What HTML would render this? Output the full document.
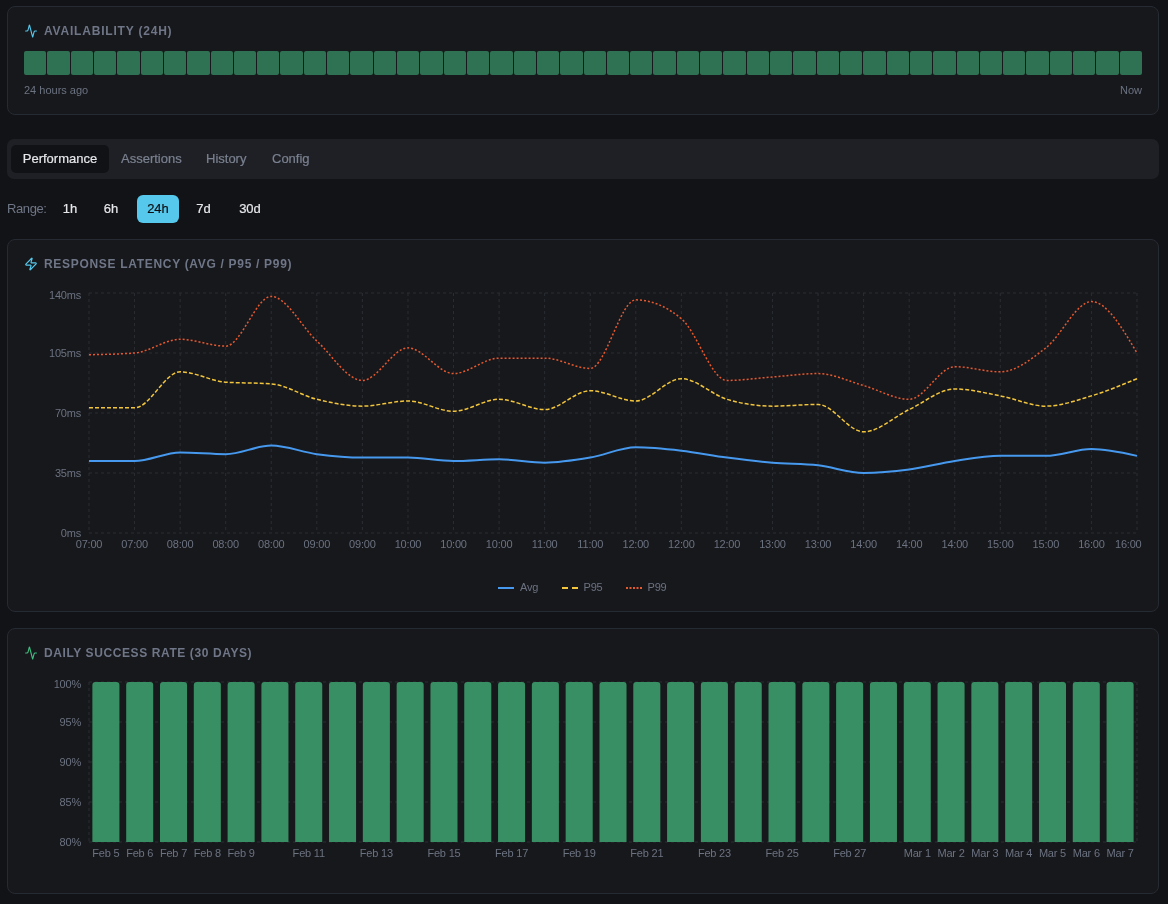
<!DOCTYPE html>
<html><head><meta charset="utf-8">
<style>
*{margin:0;padding:0;box-sizing:border-box}
html,body{width:1168px;height:904px;overflow:hidden;background:#121317;font-family:"Liberation Sans", sans-serif}
.card{position:absolute;left:7px;width:1152px;background:#17181c;border:1px solid #262a33;border-radius:8px}
.title{position:absolute;left:44px;font-size:12px;font-weight:bold;color:#6f7687;letter-spacing:0.6px;white-space:nowrap;line-height:1}
.abw{position:absolute;left:24px;top:51px;width:1118px;height:24px;display:flex;gap:1px}
.ab{flex:1;height:24px;background:#2f7153;border-radius:2px}
.small{position:absolute;font-size:11px;color:#6b7280;line-height:1;white-space:nowrap}
.tabs{position:absolute;left:7px;top:139px;width:1152px;height:40px;background:#1f2025;border-radius:7px}
.tab{position:absolute;top:145px;height:28px;font-size:13px;line-height:28px;color:#7a8190;white-space:nowrap;-webkit-text-stroke:0.2px}
.tab.act{background:#111215;color:#e6e7ea;border-radius:5px;text-align:center}
.rng{position:absolute;top:195px;height:28px;line-height:28px;font-size:13px;color:#e6e7ea;text-align:center;border-radius:6px;-webkit-text-stroke:0.2px}
.rng.act{background:#56c8ec;color:#0d0e10}
svg text.ax{font-family:"Liberation Sans", sans-serif;font-size:11px;fill:#6b7280;letter-spacing:-0.2px}
svg text.lg{font-family:"Liberation Sans", sans-serif;font-size:11px;fill:#6b7280;letter-spacing:-0.2px}
</style></head><body>
<div id="root" style="position:absolute;left:0;top:0;width:1168px;height:904px;background:#121317;will-change:transform">
<div class="card" style="top:6px;height:109px"></div>
<svg style="position:absolute;left:24px;top:24px" width="13" height="14" viewBox="-1 0 24 24" preserveAspectRatio="none" fill="none" stroke="#56c8ec" stroke-width="2" stroke-linecap="round" stroke-linejoin="round"><path d="M22 12h-2.48a2 2 0 0 0-1.93 1.46l-2.35 8.36a.25.25 0 0 1-.48 0L9.24 2.18a.25.25 0 0 0-.48 0l-2.35 8.36A2 2 0 0 1 4.49 12H2"/></svg>
<div class="title" style="top:25px;letter-spacing:0.8px">AVAILABILITY (24H)</div>
<div class="abw"><div class="ab"></div><div class="ab"></div><div class="ab"></div><div class="ab"></div><div class="ab"></div><div class="ab"></div><div class="ab"></div><div class="ab"></div><div class="ab"></div><div class="ab"></div><div class="ab"></div><div class="ab"></div><div class="ab"></div><div class="ab"></div><div class="ab"></div><div class="ab"></div><div class="ab"></div><div class="ab"></div><div class="ab"></div><div class="ab"></div><div class="ab"></div><div class="ab"></div><div class="ab"></div><div class="ab"></div><div class="ab"></div><div class="ab"></div><div class="ab"></div><div class="ab"></div><div class="ab"></div><div class="ab"></div><div class="ab"></div><div class="ab"></div><div class="ab"></div><div class="ab"></div><div class="ab"></div><div class="ab"></div><div class="ab"></div><div class="ab"></div><div class="ab"></div><div class="ab"></div><div class="ab"></div><div class="ab"></div><div class="ab"></div><div class="ab"></div><div class="ab"></div><div class="ab"></div><div class="ab"></div><div class="ab"></div></div>
<div class="small" style="left:24px;top:85px">24 hours ago</div>
<div class="small" style="left:1120px;top:85px">Now</div>

<div class="tabs"></div>
<div class="tab act" style="left:11px;width:98px">Performance</div>
<div class="tab" style="left:121px">Assertions</div>
<div class="tab" style="left:206px">History</div>
<div class="tab" style="left:272px">Config</div>

<div class="rng" style="left:7px;color:#6f7686;text-align:left;letter-spacing:-0.4px;-webkit-text-stroke:0">Range:</div>
<div class="rng" style="left:54px;width:32px">1h</div>
<div class="rng" style="left:94px;width:34px">6h</div>
<div class="rng act" style="left:137px;width:42px">24h</div>
<div class="rng" style="left:187px;width:33px">7d</div>
<div class="rng" style="left:229px;width:42px">30d</div>

<div class="card" style="top:239px;height:373px"></div>
<svg style="position:absolute;left:24px;top:257px" width="14" height="14" viewBox="0 0 24 24" fill="none" stroke="#56c8ec" stroke-width="2" stroke-linecap="round" stroke-linejoin="round"><path d="M4 14a1 1 0 0 1-.78-1.63l9.9-10.2a.5.5 0 0 1 .86.46l-1.92 6.02A1 1 0 0 0 13 10h7a1 1 0 0 1 .78 1.63l-9.9 10.2a.5.5 0 0 1-.86-.46l1.92-6.02A1 1 0 0 0 11 14z"/></svg>
<div class="title" style="top:258px;letter-spacing:0.69px">RESPONSE LATENCY (AVG / P95 / P99)</div>

<div class="card" style="top:628px;height:266px"></div>
<svg style="position:absolute;left:24px;top:646px" width="13" height="14" viewBox="-1 0 24 24" preserveAspectRatio="none" fill="none" stroke="#3fbf7f" stroke-width="2" stroke-linecap="round" stroke-linejoin="round"><path d="M22 12h-2.48a2 2 0 0 0-1.93 1.46l-2.35 8.36a.25.25 0 0 1-.48 0L9.24 2.18a.25.25 0 0 0-.48 0l-2.35 8.36A2 2 0 0 1 4.49 12H2"/></svg>
<div class="title" style="top:647px">DAILY SUCCESS RATE (30 DAYS)</div>

<svg style="position:absolute;left:0;top:0" width="1168" height="904">
<line x1="89.0" y1="293.0" x2="1137.0" y2="293.0" stroke="#2b2d34" stroke-dasharray="3 3"/>
<line x1="89.0" y1="353.0" x2="1137.0" y2="353.0" stroke="#2b2d34" stroke-dasharray="3 3"/>
<line x1="89.0" y1="413.0" x2="1137.0" y2="413.0" stroke="#2b2d34" stroke-dasharray="3 3"/>
<line x1="89.0" y1="473.0" x2="1137.0" y2="473.0" stroke="#2b2d34" stroke-dasharray="3 3"/>
<line x1="89.0" y1="533.0" x2="1137.0" y2="533.0" stroke="#2b2d34" stroke-dasharray="3 3"/>
<line x1="89.00" y1="293.0" x2="89.00" y2="533.0" stroke="#2b2d34" stroke-dasharray="3 3"/>
<line x1="134.57" y1="293.0" x2="134.57" y2="533.0" stroke="#2b2d34" stroke-dasharray="3 3"/>
<line x1="180.13" y1="293.0" x2="180.13" y2="533.0" stroke="#2b2d34" stroke-dasharray="3 3"/>
<line x1="225.70" y1="293.0" x2="225.70" y2="533.0" stroke="#2b2d34" stroke-dasharray="3 3"/>
<line x1="271.26" y1="293.0" x2="271.26" y2="533.0" stroke="#2b2d34" stroke-dasharray="3 3"/>
<line x1="316.83" y1="293.0" x2="316.83" y2="533.0" stroke="#2b2d34" stroke-dasharray="3 3"/>
<line x1="362.39" y1="293.0" x2="362.39" y2="533.0" stroke="#2b2d34" stroke-dasharray="3 3"/>
<line x1="407.96" y1="293.0" x2="407.96" y2="533.0" stroke="#2b2d34" stroke-dasharray="3 3"/>
<line x1="453.52" y1="293.0" x2="453.52" y2="533.0" stroke="#2b2d34" stroke-dasharray="3 3"/>
<line x1="499.09" y1="293.0" x2="499.09" y2="533.0" stroke="#2b2d34" stroke-dasharray="3 3"/>
<line x1="544.65" y1="293.0" x2="544.65" y2="533.0" stroke="#2b2d34" stroke-dasharray="3 3"/>
<line x1="590.22" y1="293.0" x2="590.22" y2="533.0" stroke="#2b2d34" stroke-dasharray="3 3"/>
<line x1="635.78" y1="293.0" x2="635.78" y2="533.0" stroke="#2b2d34" stroke-dasharray="3 3"/>
<line x1="681.35" y1="293.0" x2="681.35" y2="533.0" stroke="#2b2d34" stroke-dasharray="3 3"/>
<line x1="726.91" y1="293.0" x2="726.91" y2="533.0" stroke="#2b2d34" stroke-dasharray="3 3"/>
<line x1="772.48" y1="293.0" x2="772.48" y2="533.0" stroke="#2b2d34" stroke-dasharray="3 3"/>
<line x1="818.04" y1="293.0" x2="818.04" y2="533.0" stroke="#2b2d34" stroke-dasharray="3 3"/>
<line x1="863.61" y1="293.0" x2="863.61" y2="533.0" stroke="#2b2d34" stroke-dasharray="3 3"/>
<line x1="909.17" y1="293.0" x2="909.17" y2="533.0" stroke="#2b2d34" stroke-dasharray="3 3"/>
<line x1="954.74" y1="293.0" x2="954.74" y2="533.0" stroke="#2b2d34" stroke-dasharray="3 3"/>
<line x1="1000.30" y1="293.0" x2="1000.30" y2="533.0" stroke="#2b2d34" stroke-dasharray="3 3"/>
<line x1="1045.87" y1="293.0" x2="1045.87" y2="533.0" stroke="#2b2d34" stroke-dasharray="3 3"/>
<line x1="1091.43" y1="293.0" x2="1091.43" y2="533.0" stroke="#2b2d34" stroke-dasharray="3 3"/>
<line x1="1137.00" y1="293.0" x2="1137.00" y2="533.0" stroke="#2b2d34" stroke-dasharray="3 3"/>
<text x="81" y="299.0" text-anchor="end" class="ax">140ms</text>
<text x="81" y="357.0" text-anchor="end" class="ax">105ms</text>
<text x="81" y="417.0" text-anchor="end" class="ax">70ms</text>
<text x="81" y="477.0" text-anchor="end" class="ax">35ms</text>
<text x="81" y="537.0" text-anchor="end" class="ax">0ms</text>
<text x="89.00" y="548" text-anchor="middle" class="ax">07:00</text>
<text x="134.57" y="548" text-anchor="middle" class="ax">07:00</text>
<text x="180.13" y="548" text-anchor="middle" class="ax">08:00</text>
<text x="225.70" y="548" text-anchor="middle" class="ax">08:00</text>
<text x="271.26" y="548" text-anchor="middle" class="ax">08:00</text>
<text x="316.83" y="548" text-anchor="middle" class="ax">09:00</text>
<text x="362.39" y="548" text-anchor="middle" class="ax">09:00</text>
<text x="407.96" y="548" text-anchor="middle" class="ax">10:00</text>
<text x="453.52" y="548" text-anchor="middle" class="ax">10:00</text>
<text x="499.09" y="548" text-anchor="middle" class="ax">10:00</text>
<text x="544.65" y="548" text-anchor="middle" class="ax">11:00</text>
<text x="590.22" y="548" text-anchor="middle" class="ax">11:00</text>
<text x="635.78" y="548" text-anchor="middle" class="ax">12:00</text>
<text x="681.35" y="548" text-anchor="middle" class="ax">12:00</text>
<text x="726.91" y="548" text-anchor="middle" class="ax">12:00</text>
<text x="772.48" y="548" text-anchor="middle" class="ax">13:00</text>
<text x="818.04" y="548" text-anchor="middle" class="ax">13:00</text>
<text x="863.61" y="548" text-anchor="middle" class="ax">14:00</text>
<text x="909.17" y="548" text-anchor="middle" class="ax">14:00</text>
<text x="954.74" y="548" text-anchor="middle" class="ax">14:00</text>
<text x="1000.30" y="548" text-anchor="middle" class="ax">15:00</text>
<text x="1045.87" y="548" text-anchor="middle" class="ax">15:00</text>
<text x="1091.43" y="548" text-anchor="middle" class="ax">16:00</text>
<text x="1141.5" y="548" text-anchor="end" class="ax">16:00</text>
<path d="M89.00,461.00C104.19,461.00,119.38,461.00,134.57,461.00C149.75,461.00,164.94,452.43,180.13,452.43C195.32,452.43,210.51,454.14,225.70,454.14C240.88,454.14,256.07,445.57,271.26,445.57C286.45,445.57,301.64,452.14,316.83,454.14C332.01,456.14,347.20,457.57,362.39,457.57C377.58,457.57,392.77,457.57,407.96,457.57C423.14,457.57,438.33,461.00,453.52,461.00C468.71,461.00,483.90,459.29,499.09,459.29C514.28,459.29,529.46,462.71,544.65,462.71C559.84,462.71,575.03,460.14,590.22,457.57C605.41,455.00,620.59,447.29,635.78,447.29C650.97,447.29,666.16,449.00,681.35,450.71C696.54,452.43,711.72,455.57,726.91,457.57C742.10,459.57,757.29,461.43,772.48,462.71C787.67,464.00,802.86,463.57,818.04,465.29C833.23,467.00,848.42,473.00,863.61,473.00C878.80,473.00,893.99,471.57,909.17,469.57C924.36,467.57,939.55,463.29,954.74,461.00C969.93,458.71,985.12,455.86,1000.30,455.86C1015.49,455.86,1030.68,455.86,1045.87,455.86C1061.06,455.86,1076.25,449.00,1091.43,449.00C1106.62,449.00,1121.81,452.43,1137.00,455.86" fill="none" stroke="#4699ee" stroke-width="2"/>
<path d="M89.00,407.86C104.19,407.86,119.38,407.86,134.57,407.86C149.75,407.86,164.94,371.86,180.13,371.86C195.32,371.86,210.51,381.00,225.70,382.14C240.88,383.29,256.07,382.71,271.26,383.86C286.45,385.00,301.64,395.57,316.83,399.29C332.01,403.00,347.20,406.14,362.39,406.14C377.58,406.14,392.77,401.00,407.96,401.00C423.14,401.00,438.33,411.29,453.52,411.29C468.71,411.29,483.90,399.29,499.09,399.29C514.28,399.29,529.46,409.57,544.65,409.57C559.84,409.57,575.03,390.71,590.22,390.71C605.41,390.71,620.59,401.00,635.78,401.00C650.97,401.00,666.16,378.71,681.35,378.71C696.54,378.71,711.72,394.71,726.91,399.29C742.10,403.86,757.29,406.14,772.48,406.14C787.67,406.14,802.86,404.43,818.04,404.43C833.23,404.43,848.42,431.86,863.61,431.86C878.80,431.86,893.99,416.71,909.17,409.57C924.36,402.43,939.55,389.00,954.74,389.00C969.93,389.00,985.12,393.00,1000.30,395.86C1015.49,398.71,1030.68,406.14,1045.87,406.14C1061.06,406.14,1076.25,400.43,1091.43,395.86C1106.62,391.29,1121.81,385.00,1137.00,378.71" fill="none" stroke="#f2c53d" stroke-width="1.5" stroke-dasharray="4 2"/>
<path d="M89.00,354.71C104.19,354.43,119.38,354.14,134.57,353.00C149.75,351.86,164.94,339.29,180.13,339.29C195.32,339.29,210.51,346.14,225.70,346.14C240.88,346.14,256.07,296.43,271.26,296.43C286.45,296.43,301.64,327.00,316.83,341.00C332.01,355.00,347.20,380.43,362.39,380.43C377.58,380.43,392.77,347.86,407.96,347.86C423.14,347.86,438.33,373.57,453.52,373.57C468.71,373.57,483.90,358.14,499.09,358.14C514.28,358.14,529.46,358.14,544.65,358.14C559.84,358.14,575.03,368.43,590.22,368.43C605.41,368.43,620.59,299.86,635.78,299.86C650.97,299.86,666.16,306.14,681.35,318.71C696.54,331.29,711.72,380.43,726.91,380.43C742.10,380.43,757.29,378.14,772.48,377.00C787.67,375.86,802.86,373.57,818.04,373.57C833.23,373.57,848.42,381.29,863.61,385.57C878.80,389.86,893.99,399.29,909.17,399.29C924.36,399.29,939.55,366.71,954.74,366.71C969.93,366.71,985.12,371.86,1000.30,371.86C1015.49,371.86,1030.68,359.57,1045.87,347.86C1061.06,336.14,1076.25,301.57,1091.43,301.57C1106.62,301.57,1121.81,327.29,1137.00,353.00" fill="none" stroke="#e5592f" stroke-width="1.5" stroke-dasharray="2 2"/>
<line x1="498" y1="588" x2="514" y2="588" stroke="#4699ee" stroke-width="2"/>
<text x="520" y="591" class="lg">Avg</text>
<line x1="562" y1="588" x2="578" y2="588" stroke="#f2c53d" stroke-width="2" stroke-dasharray="6 4"/>
<text x="583.5" y="591" class="lg">P95</text>
<line x1="626" y1="588" x2="642" y2="588" stroke="#e5592f" stroke-width="2" stroke-dasharray="2 1.5"/>
<text x="647.5" y="591" class="lg">P99</text>
<line x1="89.0" y1="682.0" x2="1137.0" y2="682.0" stroke="#2b2d34" stroke-dasharray="3 3"/>
<line x1="89.0" y1="722.0" x2="1137.0" y2="722.0" stroke="#2b2d34" stroke-dasharray="3 3"/>
<line x1="89.0" y1="762.0" x2="1137.0" y2="762.0" stroke="#2b2d34" stroke-dasharray="3 3"/>
<line x1="89.0" y1="802.0" x2="1137.0" y2="802.0" stroke="#2b2d34" stroke-dasharray="3 3"/>
<line x1="89.0" y1="842.0" x2="1137.0" y2="842.0" stroke="#2b2d34" stroke-dasharray="3 3"/>
<line x1="89.0" y1="682.0" x2="89.0" y2="842.0" stroke="#2b2d34" stroke-dasharray="3 3"/>
<line x1="1137.0" y1="682.0" x2="1137.0" y2="842.0" stroke="#2b2d34" stroke-dasharray="3 3"/>
<text x="81" y="688.0" text-anchor="end" class="ax">100%</text>
<text x="81" y="726.0" text-anchor="end" class="ax">95%</text>
<text x="81" y="766.0" text-anchor="end" class="ax">90%</text>
<text x="81" y="806.0" text-anchor="end" class="ax">85%</text>
<text x="81" y="846.0" text-anchor="end" class="ax">80%</text>
<path d="M92.38,842.0 L92.38,685.0 A3,3,0,0,1,95.38,682.0 L116.43,682.0 A3,3,0,0,1,119.43,685.0 L119.43,842.0 Z" fill="#398f64"/>
<text x="105.90" y="857" text-anchor="middle" class="ax">Feb 5</text>
<path d="M126.19,842.0 L126.19,685.0 A3,3,0,0,1,129.19,682.0 L150.23,682.0 A3,3,0,0,1,153.23,685.0 L153.23,842.0 Z" fill="#398f64"/>
<text x="139.71" y="857" text-anchor="middle" class="ax">Feb 6</text>
<path d="M159.99,842.0 L159.99,685.0 A3,3,0,0,1,162.99,682.0 L184.04,682.0 A3,3,0,0,1,187.04,685.0 L187.04,842.0 Z" fill="#398f64"/>
<text x="173.52" y="857" text-anchor="middle" class="ax">Feb 7</text>
<path d="M193.80,842.0 L193.80,685.0 A3,3,0,0,1,196.80,682.0 L217.85,682.0 A3,3,0,0,1,220.85,685.0 L220.85,842.0 Z" fill="#398f64"/>
<text x="207.32" y="857" text-anchor="middle" class="ax">Feb 8</text>
<path d="M227.61,842.0 L227.61,685.0 A3,3,0,0,1,230.61,682.0 L251.65,682.0 A3,3,0,0,1,254.65,685.0 L254.65,842.0 Z" fill="#398f64"/>
<text x="241.13" y="857" text-anchor="middle" class="ax">Feb 9</text>
<path d="M261.41,842.0 L261.41,685.0 A3,3,0,0,1,264.41,682.0 L285.46,682.0 A3,3,0,0,1,288.46,685.0 L288.46,842.0 Z" fill="#398f64"/>
<path d="M295.22,842.0 L295.22,685.0 A3,3,0,0,1,298.22,682.0 L319.26,682.0 A3,3,0,0,1,322.26,685.0 L322.26,842.0 Z" fill="#398f64"/>
<text x="308.74" y="857" text-anchor="middle" class="ax">Feb 11</text>
<path d="M329.03,842.0 L329.03,685.0 A3,3,0,0,1,332.03,682.0 L353.07,682.0 A3,3,0,0,1,356.07,685.0 L356.07,842.0 Z" fill="#398f64"/>
<path d="M362.83,842.0 L362.83,685.0 A3,3,0,0,1,365.83,682.0 L386.88,682.0 A3,3,0,0,1,389.88,685.0 L389.88,842.0 Z" fill="#398f64"/>
<text x="376.35" y="857" text-anchor="middle" class="ax">Feb 13</text>
<path d="M396.64,842.0 L396.64,685.0 A3,3,0,0,1,399.64,682.0 L420.68,682.0 A3,3,0,0,1,423.68,685.0 L423.68,842.0 Z" fill="#398f64"/>
<path d="M430.45,842.0 L430.45,685.0 A3,3,0,0,1,433.45,682.0 L454.49,682.0 A3,3,0,0,1,457.49,685.0 L457.49,842.0 Z" fill="#398f64"/>
<text x="443.97" y="857" text-anchor="middle" class="ax">Feb 15</text>
<path d="M464.25,842.0 L464.25,685.0 A3,3,0,0,1,467.25,682.0 L488.30,682.0 A3,3,0,0,1,491.30,685.0 L491.30,842.0 Z" fill="#398f64"/>
<path d="M498.06,842.0 L498.06,685.0 A3,3,0,0,1,501.06,682.0 L522.10,682.0 A3,3,0,0,1,525.10,685.0 L525.10,842.0 Z" fill="#398f64"/>
<text x="511.58" y="857" text-anchor="middle" class="ax">Feb 17</text>
<path d="M531.86,842.0 L531.86,685.0 A3,3,0,0,1,534.86,682.0 L555.91,682.0 A3,3,0,0,1,558.91,685.0 L558.91,842.0 Z" fill="#398f64"/>
<path d="M565.67,842.0 L565.67,685.0 A3,3,0,0,1,568.67,682.0 L589.72,682.0 A3,3,0,0,1,592.72,685.0 L592.72,842.0 Z" fill="#398f64"/>
<text x="579.19" y="857" text-anchor="middle" class="ax">Feb 19</text>
<path d="M599.48,842.0 L599.48,685.0 A3,3,0,0,1,602.48,682.0 L623.52,682.0 A3,3,0,0,1,626.52,685.0 L626.52,842.0 Z" fill="#398f64"/>
<path d="M633.28,842.0 L633.28,685.0 A3,3,0,0,1,636.28,682.0 L657.33,682.0 A3,3,0,0,1,660.33,685.0 L660.33,842.0 Z" fill="#398f64"/>
<text x="646.81" y="857" text-anchor="middle" class="ax">Feb 21</text>
<path d="M667.09,842.0 L667.09,685.0 A3,3,0,0,1,670.09,682.0 L691.14,682.0 A3,3,0,0,1,694.14,685.0 L694.14,842.0 Z" fill="#398f64"/>
<path d="M700.90,842.0 L700.90,685.0 A3,3,0,0,1,703.90,682.0 L724.94,682.0 A3,3,0,0,1,727.94,685.0 L727.94,842.0 Z" fill="#398f64"/>
<text x="714.42" y="857" text-anchor="middle" class="ax">Feb 23</text>
<path d="M734.70,842.0 L734.70,685.0 A3,3,0,0,1,737.70,682.0 L758.75,682.0 A3,3,0,0,1,761.75,685.0 L761.75,842.0 Z" fill="#398f64"/>
<path d="M768.51,842.0 L768.51,685.0 A3,3,0,0,1,771.51,682.0 L792.55,682.0 A3,3,0,0,1,795.55,685.0 L795.55,842.0 Z" fill="#398f64"/>
<text x="782.03" y="857" text-anchor="middle" class="ax">Feb 25</text>
<path d="M802.32,842.0 L802.32,685.0 A3,3,0,0,1,805.32,682.0 L826.36,682.0 A3,3,0,0,1,829.36,685.0 L829.36,842.0 Z" fill="#398f64"/>
<path d="M836.12,842.0 L836.12,685.0 A3,3,0,0,1,839.12,682.0 L860.17,682.0 A3,3,0,0,1,863.17,685.0 L863.17,842.0 Z" fill="#398f64"/>
<text x="849.65" y="857" text-anchor="middle" class="ax">Feb 27</text>
<path d="M869.93,842.0 L869.93,685.0 A3,3,0,0,1,872.93,682.0 L893.97,682.0 A3,3,0,0,1,896.97,685.0 L896.97,842.0 Z" fill="#398f64"/>
<path d="M903.74,842.0 L903.74,685.0 A3,3,0,0,1,906.74,682.0 L927.78,682.0 A3,3,0,0,1,930.78,685.0 L930.78,842.0 Z" fill="#398f64"/>
<text x="917.26" y="857" text-anchor="middle" class="ax">Mar 1</text>
<path d="M937.54,842.0 L937.54,685.0 A3,3,0,0,1,940.54,682.0 L961.59,682.0 A3,3,0,0,1,964.59,685.0 L964.59,842.0 Z" fill="#398f64"/>
<text x="951.06" y="857" text-anchor="middle" class="ax">Mar 2</text>
<path d="M971.35,842.0 L971.35,685.0 A3,3,0,0,1,974.35,682.0 L995.39,682.0 A3,3,0,0,1,998.39,685.0 L998.39,842.0 Z" fill="#398f64"/>
<text x="984.87" y="857" text-anchor="middle" class="ax">Mar 3</text>
<path d="M1005.15,842.0 L1005.15,685.0 A3,3,0,0,1,1008.15,682.0 L1029.20,682.0 A3,3,0,0,1,1032.20,685.0 L1032.20,842.0 Z" fill="#398f64"/>
<text x="1018.68" y="857" text-anchor="middle" class="ax">Mar 4</text>
<path d="M1038.96,842.0 L1038.96,685.0 A3,3,0,0,1,1041.96,682.0 L1063.01,682.0 A3,3,0,0,1,1066.01,685.0 L1066.01,842.0 Z" fill="#398f64"/>
<text x="1052.48" y="857" text-anchor="middle" class="ax">Mar 5</text>
<path d="M1072.77,842.0 L1072.77,685.0 A3,3,0,0,1,1075.77,682.0 L1096.81,682.0 A3,3,0,0,1,1099.81,685.0 L1099.81,842.0 Z" fill="#398f64"/>
<text x="1086.29" y="857" text-anchor="middle" class="ax">Mar 6</text>
<path d="M1106.57,842.0 L1106.57,685.0 A3,3,0,0,1,1109.57,682.0 L1130.62,682.0 A3,3,0,0,1,1133.62,685.0 L1133.62,842.0 Z" fill="#398f64"/>
<text x="1120.10" y="857" text-anchor="middle" class="ax">Mar 7</text>
</svg>
</div>
</body></html>
